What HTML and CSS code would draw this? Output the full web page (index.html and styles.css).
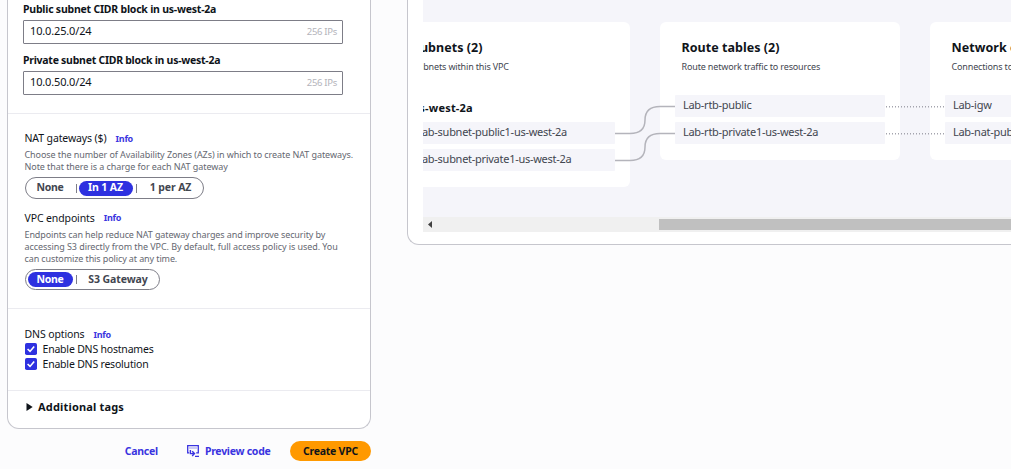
FILE: index.html
```html
<!DOCTYPE html>
<html lang="en">
<head>
<meta charset="utf-8">
<title>Create VPC</title>
<link rel="stylesheet" href="styles.css">
</head>
<body>
<main class="page">
  <div class="form-column">
    <form class="panel">
      <section class="section cidr">
        <label class="field-label">Public subnet CIDR block in us-west-2a</label>
        <div class="input"><span class="value">10.0.25.0/24</span><span class="hint">256 IPs</span></div>
        <label class="field-label private">Private subnet CIDR block in us-west-2a</label>
        <div class="input"><span class="value">10.0.50.0/24</span><span class="hint">256 IPs</span></div>
      </section>
      <section class="section gateways">
        <div class="title"><span>NAT gateways ($)</span><a class="info">Info</a></div>
        <p class="desc">Choose the number of Availability Zones (AZs) in which to create NAT gateways.<br>Note that there is a charge for each NAT gateway</p>
        <div class="segments nat"><span class="seg s-none">None</span><i class="bar"></i><span class="seg s-in on">In 1 AZ</span><i class="bar"></i><span class="seg s-per">1 per AZ</span></div>
        <div class="title vpc"><span>VPC endpoints</span><a class="info">Info</a></div>
        <p class="desc endpoints">Endpoints can help reduce NAT gateway charges and improve security by<br><span class="policy">accessing S3 directly from the VPC. By default, full access policy is used. You</span><br>can customize this policy at any time.</p>
        <div class="segments s3"><span class="seg s-none on">None</span><i class="bar"></i><span class="seg s-s3">S3 Gateway</span></div>
      </section>
      <section class="section dns">
        <div class="title"><span>DNS options</span><a class="info">Info</a></div>
        <div class="check"><svg class="box" viewBox="0 0 12 12"><rect width="12" height="12" rx="1.8" fill="#2e31e0"/><path d="M2.6 6 5 8.4 9.2 3.4" fill="none" stroke="#fff" stroke-width="1.6"/></svg><span>Enable DNS hostnames</span></div>
        <div class="check"><svg class="box" viewBox="0 0 12 12"><rect width="12" height="12" rx="1.8" fill="#2e31e0"/><path d="M2.6 6 5 8.4 9.2 3.4" fill="none" stroke="#fff" stroke-width="1.6"/></svg><span>Enable DNS resolution</span></div>
      </section>
      <section class="section tags"><svg class="caret" viewBox="0 0 7 8"><path d="M.5 0 6.7 4 .5 8Z" fill="#0f141a"/></svg><span>Additional tags</span></section>
    </form>
    <div class="actions">
      <a class="link">Cancel</a>
      <a class="link preview"><svg class="code-icon" viewBox="0 0 12 12"><path d="M2.2 7.8H.7V.7h10.6v7.1H9.2" fill="none" stroke="#3a34e0" stroke-width="1.3"/><path d="M2.5 3h7.5" fill="none" stroke="#3a34e0" stroke-width="1.2" stroke-dasharray="1 1"/><path d="M3.4 5v3.6h3.8M5.2 6.2l2.3 2.4-2.3 2.4M8 11.4h4" fill="none" stroke="#3a34e0" stroke-width="1.4"/></svg><span>Preview code</span></a>
      <button class="create">Create VPC</button>
    </div>
  </div>
  <div class="map-panel">
    <div class="canvas">
      <div class="card subnets">
        <h3>Subnets (2)</h3>
        <p>Subnets within this VPC</p>
        <h4>us-west-2a</h4>
        <div class="row"><span>Lab-subnet-public1-us-west-2a</span></div>
        <div class="row"><span>Lab-subnet-private1-us-west-2a</span></div>
      </div>
      <div class="card routes">
        <h3>Route tables (2)</h3>
        <p>Route network traffic to resources</p>
        <div class="row"><span>Lab-rtb-public</span></div>
        <div class="row"><span>Lab-rtb-private1-us-west-2a</span></div>
      </div>
      <div class="card network">
        <h3>Network connections (3)</h3>
        <p>Connections to other networks</p>
        <div class="row"><span>Lab-igw</span></div>
        <div class="row"><span>Lab-nat-public1-us-west-2a</span></div>
      </div>
      <svg class="wires" viewBox="0 0 588 217">
        <g fill="none" stroke="#b4b4bb" stroke-width="1.5">
          <path d="M192 133.5H207Q222 133.5 222 120Q222 106.5 237 106.5H252"/>
          <path d="M192 160.5H207Q222 160.5 222 147Q222 133.5 237 133.5H252"/>
          <path d="M463 106.7H522M463 133.7H522" stroke="#a4a4ad" stroke-dasharray="1 2"/>
        </g>
      </svg>
    </div>
    <div class="scroll"><svg class="arrow" viewBox="0 0 4 7"><path d="M4 0V7L0 3.5Z" fill="#404040"/></svg><i class="thumb"></i></div>
  </div>
</main>
</body>
</html>
```
FILE: styles.css
```css
* { box-sizing: border-box; }
body { margin: 0; background: #fcfcfd; font-family: "Noto Sans", sans-serif; font-size: 11px; color: #0f141a; }
h3, h4, p { margin: 0; }
.page { display: flex; width: 1011px; height: 469px; overflow: hidden; padding-left: 7px; white-space: nowrap; }
.form-column { width: 364px; flex: none; }
.panel { height: 429px; background: #fff; border: 1px solid #c6c6cd; border-top: 0; border-radius: 0 0 12px 12px; }
.section { border-bottom: 1px solid #ebebf0; }
.cidr { height: 114px; padding: 1px 27px 0 15px; }
.field-label { display: block; height: 16px; line-height: 16px; margin-bottom: 3px; font-weight: 700; font-size: 10.5px; letter-spacing: -.22px; }
.private { letter-spacing: -.26px; }
.input { display: flex; justify-content: space-between; height: 24px; width: 320px; margin-bottom: 8px; padding: 0 5px 0 6px; border: 1px solid #7d7d87; border-radius: 1px; line-height: 20px; }
.value { letter-spacing: -.15px; }
.hint { color: #b4b4bb; font-size: 9.5px; letter-spacing: -.3px; line-height: 21px; }
.gateways { height: 195px; padding: 16px 0 0 16.5px; }
.title { display: flex; height: 18px; line-height: 17px; font-size: 10.5px; letter-spacing: -.12px; }
.info { margin-left: 9px; color: #3a34e0; font-weight: 700; font-size: 9px; letter-spacing: -.25px; }
.desc { margin-top: 1px; font-size: 9px; line-height: 12px; letter-spacing: -.075px; color: #656871; }
.endpoints { margin-top: 2px; letter-spacing: -.11px; }
.policy { letter-spacing: -.07px; }
.segments { display: flex; align-items: center; height: 22px; margin-top: 4px; border: 1px solid #7d7d87; border-radius: 11px; padding: 0 2px; font-weight: 700; font-size: 10.5px; color: #424650; letter-spacing: -.1px; }
.nat { width: 179px; }
.s3 { width: 135px; height: 21px; }
.seg { flex: none; height: 15px; line-height: 13px; border-radius: 8px; text-align: center; }
.s3 .seg { line-height: 15px; }
.on { background: #2e31e0; color: #fff; }
.s-none { width: 45px; letter-spacing: -.3px; }
.s-in { width: 54px; }
.s-per { width: 64px; }
.s-s3 { width: 79px; }
.bar { width: 1px; height: 9px; margin: 0 2px 0 3px; background: #7d7d87; flex: none; }
.vpc { margin-top: 10px; line-height: 18px; }
.dns { height: 82px; padding: 17px 0 0 16.5px; }
.dns .title { height: 16px; line-height: 17px; }
.check { display: flex; height: 15px; padding-top: 1px; gap: 6px; font-size: 10.5px; line-height: 12px; letter-spacing: -.2px; }
.box { width: 12px; height: 12px; flex: none; }
.tags { display: flex; align-items: center; height: 33px; padding: 0 0 2px 18px; gap: 5px; border: 0; font-weight: 700; letter-spacing: .17px; }
.caret { width: 7px; height: 8px; }
.actions { display: flex; align-items: center; justify-content: flex-end; height: 20px; margin-top: 12px; }
.link { color: #3a34e0; font-weight: 700; font-size: 10.5px; letter-spacing: -.27px; }
.preview { display: flex; align-items: center; gap: 6px; margin: 0 19.5px 0 29px; }
.code-icon { width: 12px; height: 12px; }
.create { width: 81px; height: 20px; border: 0; border-radius: 10px; padding: 0; background: #ff9900; color: #0f141a; font: 700 10.5px "Noto Sans", sans-serif; letter-spacing: -.25px; }
.map-panel { flex: none; width: 640px; height: 245px; margin-left: 36px; padding-left: 15px; background: #fff; border: solid #c6c6cd; border-width: 0 0 1px 1px; border-radius: 0 0 0 12px; }
.canvas { position: relative; display: flex; align-items: flex-start; gap: 30px; width: 588px; height: 217px; padding-top: 22px; overflow: hidden; background: #f5f5fa; }
.card { flex: none; width: 240px; height: 138px; padding: 16px 15px 0; border-radius: 6px; background: #fff; }
.subnets { height: 165px; margin-left: -33px; }
.card h3 { height: 20px; padding-left: 6.5px; font-size: 12.5px; line-height: 19px; letter-spacing: .04px; }
.subnets h3 { padding-left: 8px; }
.card p { height: 16px; padding-left: 6.5px; margin-bottom: 21px; font-size: 9px; line-height: 17px; letter-spacing: -.15px; color: #424650; }
.subnets p { margin-bottom: 0; height: 38px; padding-left: 8px; }
.card h4 { height: 26px; padding: 2px 0 0 7px; font-size: 11px; line-height: 20px; letter-spacing: .2px; }
.row { height: 22px; margin-bottom: 5px; padding-left: 8px; background: #f5f5fa; border-radius: 1px; line-height: 20px; letter-spacing: -.28px; color: #424650; }
.subnets .row { padding-left: 11.5px; }
.wires { position: absolute; left: 0; top: 0; width: 588px; height: 217px; }
.scroll { display: flex; align-items: center; width: 588px; height: 15px; padding-left: 5px; background: #f0f0f0; }
.arrow { width: 4px; height: 7px; flex: none; }
.thumb { flex: 1; height: 11px; margin-left: 227px; background: #c0c0c0; }
```
